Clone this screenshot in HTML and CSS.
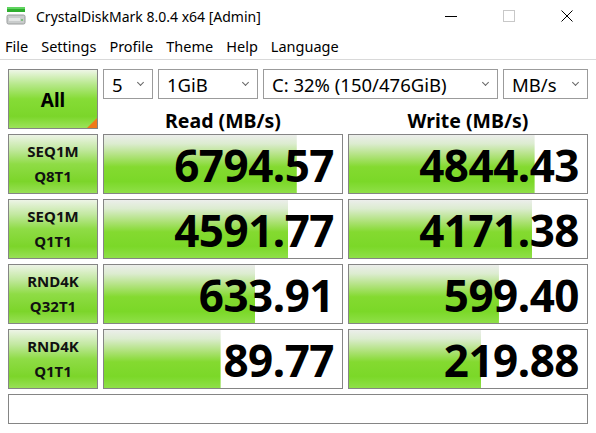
FILE: index.html
```html
<!DOCTYPE html>
<html>
<head>
<meta charset="utf-8">
<link rel="stylesheet" href="styles.css">
</head>
<body>
<div class="titlebar">
  <svg class="appicon" width="20" height="20" viewBox="0 0 20 20">
    <rect x="1" y="1" width="18" height="5" fill="#2fae2f"/>
    <rect x="1" y="1" width="18" height="2" fill="#5fd45f"/>
    <rect x="1" y="9" width="18" height="9" rx="1.5" fill="#c9cccc" stroke="#9a9d9d" stroke-width="1"/>
    <rect x="3" y="12" width="11" height="3" fill="#e4e6e6"/>
    <rect x="15" y="13" width="2" height="2" fill="#7fbf7f"/>
  </svg>
  <span class="title">CrystalDiskMark 8.0.4 x64 [Admin]</span>
  <div class="winctrls">
    <span class="wc"><svg width="12" height="12" viewBox="0 0 12 12"><line x1="0" y1="6.5" x2="12" y2="6.5" stroke="#000" stroke-width="1"/></svg></span>
    <span class="wc"><svg width="12" height="12" viewBox="0 0 12 12"><rect x="0.5" y="0.5" width="11" height="11" fill="none" stroke="#c8c8c8" stroke-width="1"/></svg></span>
    <span class="wc"><svg width="12" height="12" viewBox="0 0 12 12"><path d="M0.5 0.5 L11.5 11.5 M11.5 0.5 L0.5 11.5" stroke="#000" stroke-width="1"/></svg></span>
  </div>
</div>
<div class="menubar">
  <span>File</span><span>Settings</span><span>Profile</span><span>Theme</span><span>Help</span><span>Language</span>
</div>
<div class="main">
  <div class="grid">
    <div class="allbtn">All</div>
    <div class="topright">
      <div class="selects">
        <div class="sel s1"><span>5</span><i class="chev"></i></div>
        <div class="sel s2"><span>1GiB</span><i class="chev"></i></div>
        <div class="sel s3"><span>C: 32% (150/476GiB)</span><i class="chev"></i></div>
        <div class="sel s4"><span>MB/s</span><i class="chev"></i></div>
      </div>
      <div class="heads">
        <div class="head">Read (MB/s)</div>
        <div class="head">Write (MB/s)</div>
      </div>
    </div>

    <div class="testbtn">SEQ1M<br>Q8T1</div>
    <div class="bar" style="--w:81%">6794.57</div>
    <div class="bar" style="--w:78%">4844.43</div>

    <div class="testbtn">SEQ1M<br>Q1T1</div>
    <div class="bar" style="--w:77.5%">4591.77</div>
    <div class="bar" style="--w:77%">4171.38</div>

    <div class="testbtn">RND4K<br>Q32T1</div>
    <div class="bar" style="--w:63.5%">633.91</div>
    <div class="bar" style="--w:63%">599.40</div>

    <div class="testbtn">RND4K<br>Q1T1</div>
    <div class="bar" style="--w:49%">89.77</div>
    <div class="bar" style="--w:55.5%">219.88</div>

    <div class="comment"></div>
  </div>
</div>
</body>
</html>
```
FILE: styles.css
```css
* { box-sizing: border-box; }
html, body {
  margin: 0;
  padding: 0;
  background: #ffffff;
  width: 596px;
  height: 433px;
  overflow: hidden;
  font-family: "Noto Sans", "Open Sans", sans-serif;
  color: #000;
}
.titlebar {
  height: 32px;
  display: flex;
  align-items: center;
  padding-left: 6px;
}
.appicon { margin-right: 10px; }
.title {
  font-size: 14px;
  color: #000;
}
.winctrls {
  margin-left: auto;
  display: flex;
  height: 32px;
}
.wc {
  width: 58px;
  height: 32px;
  display: flex;
  align-items: center;
  justify-content: center;
}
.menubar {
  height: 28px;
  display: flex;
  align-items: center;
  padding-left: 5px;
  padding-top: 1px;
  font-size: 14.5px;
  border-bottom: 1px solid #d9d9d9;
}
.menubar span { margin-right: 13px; }
.main {
  padding: 9px 8px 0 8px;
}
.grid {
  display: grid;
  grid-template-columns: 90px 240px 240px;
  grid-template-rows: 60px 60px 60px 60px 60px 30px;
  column-gap: 5px;
  row-gap: 5px;
}
.allbtn {
  position: relative;
  border: 1px solid #858585;
  background: linear-gradient(to bottom, #eef6e6 0%, #b6e88a 25%, #86dc36 50%, #7bd62a 80%, #9ce35a 100%);
  display: flex;
  align-items: center;
  justify-content: center;
  font-weight: 700;
  font-size: 19px;
  padding-top: 2px;
}
.allbtn::after {
  content: "";
  position: absolute;
  right: 0;
  bottom: 0;
  width: 0;
  height: 0;
  border-left: 10px solid transparent;
  border-bottom: 10px solid #f07a1a;
}
.topright {
  grid-column: 2 / 4;
  display: flex;
  flex-direction: column;
}
.selects {
  display: flex;
  gap: 5px;
  height: 30px;
}
.sel {
  border: 1px solid #9b9b9b;
  background: #fff;
  display: flex;
  align-items: center;
  padding-left: 8px;
  padding-right: 9px;
  font-size: 18.5px;
}
.sel span { flex: 1; white-space: nowrap; }
.s1 { width: 50px; }
.s2 { width: 100px; }
.s3 { width: 235px; }
.s4 { width: 85px; }
.chev {
  width: 5px;
  height: 5px;
  border-right: 1px solid #666;
  border-bottom: 1px solid #666;
  transform: rotate(45deg);
  margin-top: -4px;
}
.heads {
  display: flex;
  gap: 5px;
  height: 30px;
}
.head {
  flex: 1;
  text-align: center;
  font-weight: 700;
  font-size: 19.5px;
  line-height: 22px;
  padding-top: 11px;
  white-space: nowrap;
}
.testbtn {
  border: 1px solid #858585;
  background: linear-gradient(to bottom, #edf4e6 0%, #c2e8a0 25%, #8fdc46 50%, #7cd52a 80%, #98e056 100%);
  display: flex;
  align-items: center;
  justify-content: center;
  text-align: center;
  font-weight: 700;
  font-size: 15px;
  line-height: 25px;
  color: #111;
}
.bar {
  border: 1px solid #858585;
  background-color: #fff;
  background-image: linear-gradient(to bottom, #eceeeb 0%, #dcecd0 15%, #b0e27c 36%, #84da30 55%, #7bd828 80%, #8fe048 100%);
  background-repeat: no-repeat;
  background-size: var(--w) 100%;
  display: flex;
  align-items: center;
  justify-content: flex-end;
  padding-right: 8px;
  font-weight: 700;
  font-size: 44px;
  letter-spacing: -0.5px;
  line-height: 1;
  padding-top: 2px;
}
.comment {
  grid-column: 1 / 4;
  border: 1px solid #858585;
  background: #fff;
}
```
